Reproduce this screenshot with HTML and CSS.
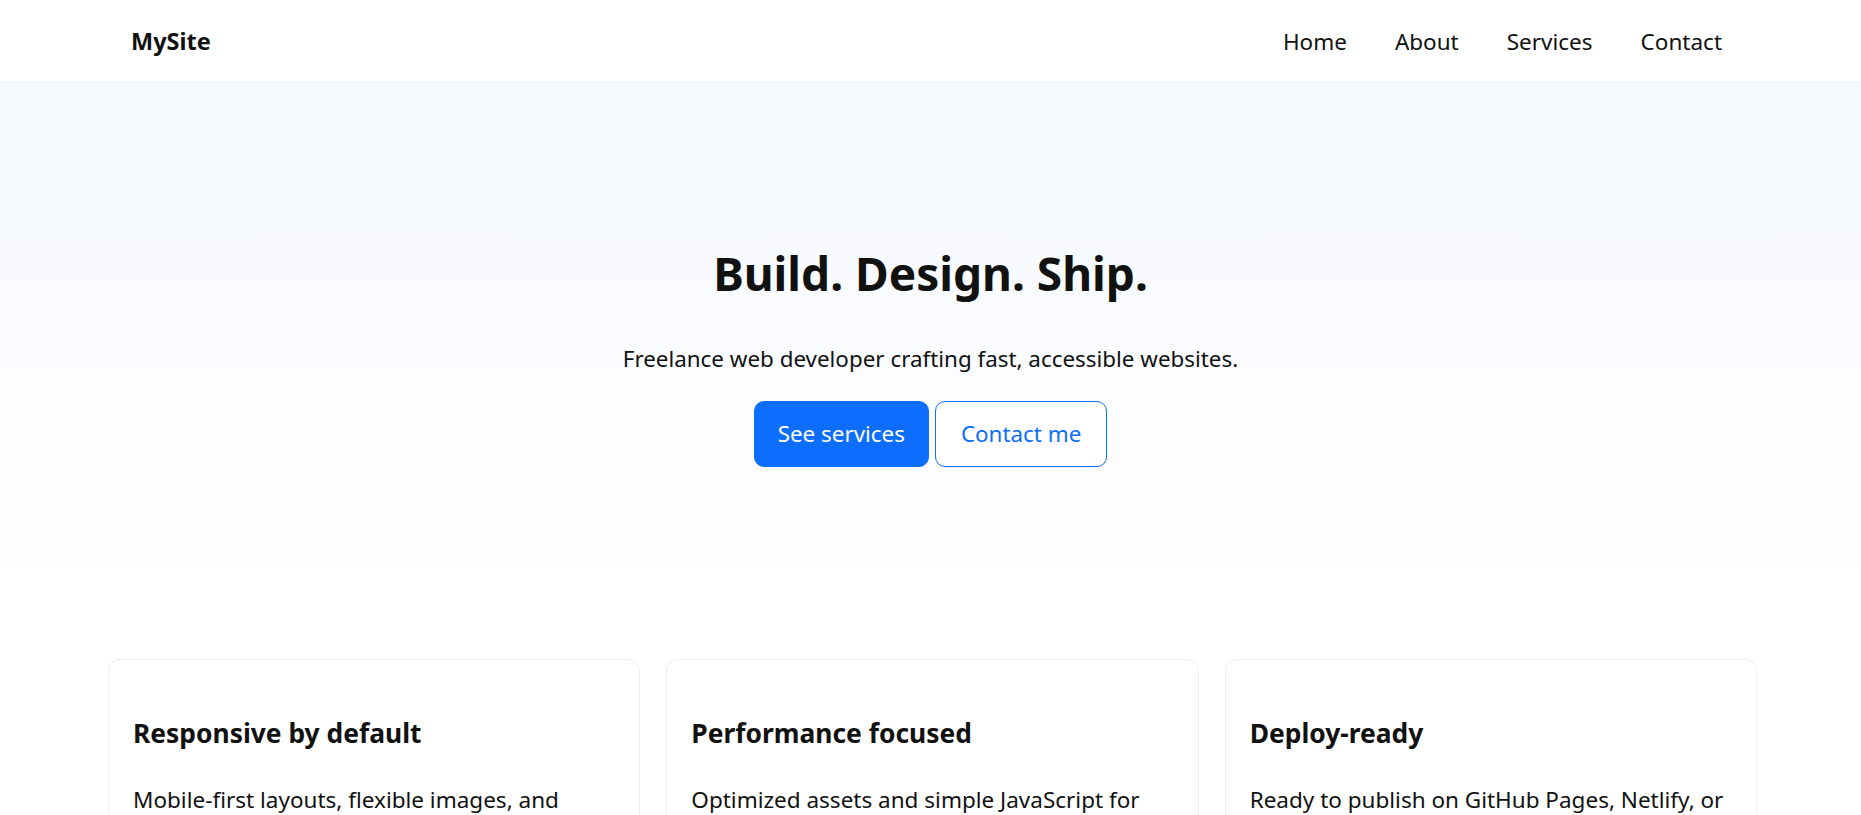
FILE: index.html
```html
<!DOCTYPE html>
<html lang="en">
<head>
<meta charset="utf-8">
<title>MySite</title>
<link rel="stylesheet" href="styles.css">
</head>
<body>
<header class="site-header">
  <div class="header-inner">
    <a class="brand" href="#">MySite</a>
    <nav class="nav">
      <a href="#">Home</a>
      <a href="#">About</a>
      <a href="#">Services</a>
      <a href="#">Contact</a>
    </nav>
  </div>
</header>
<main>
  <section class="hero">
    <h1 class="hero-title">Build. Design. Ship.</h1>
    <p class="hero-lead">Freelance web developer crafting fast, accessible websites.</p>
    <div class="hero-actions">
      <a class="btn btn-primary" href="#">See services</a>
      <a class="btn btn-outline" href="#">Contact me</a>
    </div>
  </section>
  <section class="features">
    <div class="card">
      <h3 class="card-title">Responsive by default</h3>
      <p class="card-text">Mobile-first layouts, flexible images, and</p>
    </div>
    <div class="card">
      <h3 class="card-title">Performance focused</h3>
      <p class="card-text">Optimized assets and simple JavaScript for</p>
    </div>
    <div class="card">
      <h3 class="card-title">Deploy-ready</h3>
      <p class="card-text">Ready to publish on GitHub Pages, Netlify, or</p>
    </div>
  </section>
</main>
</body>
</html>
```
FILE: styles.css
```css
* { box-sizing: border-box; }
html, body { margin: 0; padding: 0; }
body {
  font-family: "Noto Sans", "Open Sans", sans-serif;
  color: #111;
  background: #fff;
}
a { text-decoration: none; color: inherit; }

.site-header {
  height: 83px;
  border-bottom: 1px solid #e9ecef;
  background: #fff;
}
.header-inner {
  height: 100%;
  margin: 0 104px 0 108px;
  padding: 0 35px 0 23px;
  display: flex;
  align-items: center;
  justify-content: space-between;
}
.brand {
  font-size: 23.5px;
  font-weight: 700;
  color: #111;
}
.nav {
  display: flex;
  gap: 48px;
  font-size: 22.5px;
}
.nav a { color: #111; }

.hero {
  background: linear-gradient(180deg, #f5f9fe 0%, #ffffff 100%);
  text-align: center;
  padding: 163px 0 164px;
}
.hero-title {
  margin: 0;
  font-size: 46px;
  line-height: 1.2;
  font-weight: 700;
  color: #111;
}
.hero-lead {
  margin: 41px 0 0;
  font-size: 22.4px;
  line-height: 1.5;
}
.hero-actions {
  margin-top: 25px;
  display: flex;
  justify-content: center;
  gap: 6px;
}
.btn {
  display: inline-block;
  font-size: 22.4px;
  line-height: 32px;
  padding: 16px 24px;
  border-radius: 10px;
  border: 1px solid #0d6efd;
}
.btn-primary {
  background: #0d6efd;
  color: #fff;
  padding-left: 23px;
  padding-right: 23px;
}
.btn-outline {
  background: #fff;
  color: #0d6efd;
  padding-left: 25px;
  padding-right: 25px;
}

.features {
  margin: 28px 104px 0 108px;
  display: grid;
  grid-template-columns: repeat(3, 1fr);
  gap: 26px;
}
.card {
  background: #fff;
  border: 1px solid #eceef0;
  border-radius: 12px;
  padding: 32px 24px 24px;
  min-height: 300px;
}
.card-title {
  margin: 26px 0 0;
  font-size: 26.4px;
  line-height: 1.2;
  font-weight: 700;
}
.card-text {
  margin: 34px 0 0;
  font-size: 22.5px;
  line-height: 1.5;
}
```
